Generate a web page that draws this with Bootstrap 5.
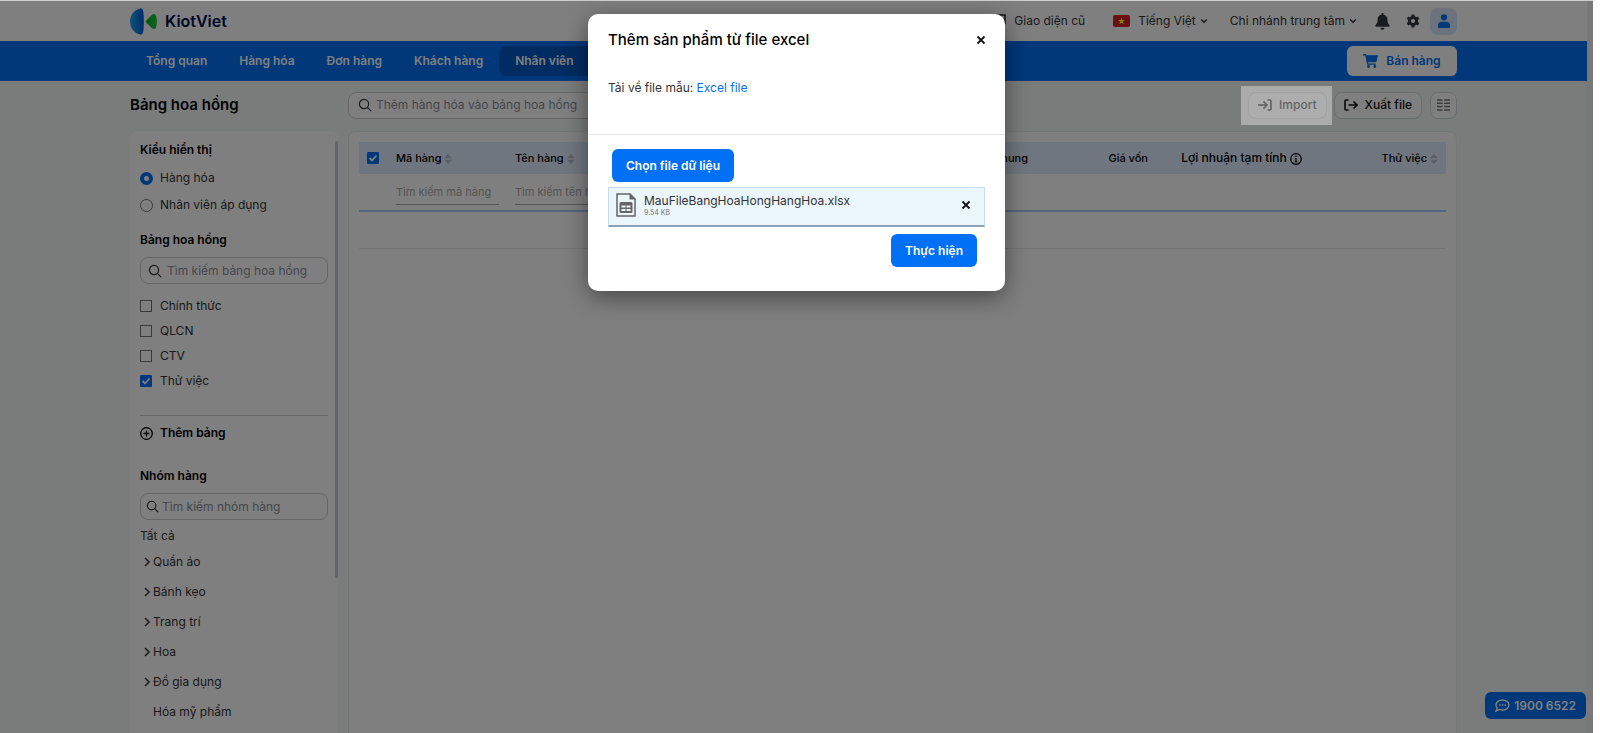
<!DOCTYPE html>
<html lang="vi">
<head>
<meta charset="utf-8">
<meta name="viewport" content="width=device-width, initial-scale=1">
<title>KiotViet - Bảng hoa hồng</title>
<link href="https://cdn.jsdelivr.net/npm/bootstrap@5.3.0/dist/css/bootstrap.min.css" rel="stylesheet">
<style>
:root{--kv:#0070f4}
html,body{height:100%}
body{font-family:Inter,"Open Sans",sans-serif;font-size:12px;line-height:18px;color:#333;background:#fff;overflow:hidden}
.shell{height:100vh;margin-right:7px;border-top:1px solid #ccc;background:#f4f8f7;padding-right:6px;position:relative;overflow:hidden}
.gutter{position:absolute;top:0;right:0;bottom:0;width:6px;background:#f0f0f0}
.wrap{max-width:1327px;width:100%;margin:0 auto}
.topbar{background:#fff;height:40px}
.brandname{font-size:16px;font-weight:600;color:#000a4d;text-decoration:none}
.topbar .lnk{color:#333;text-decoration:none;font-size:12px}
.xbtn{border:0;background:none;padding:0;line-height:0}
.avatar{width:27px;height:27px;border-radius:8px;background:#d9e7fb}
.lang{margin-right:22px}
.branch{margin-right:18px}
.gear{margin-right:10px}
.mainnav{background:var(--kv);height:40px}
.mainnav .nav-link{color:#fff;font-weight:600;font-size:12px;line-height:18px;padding:6px 16px;border-radius:8px}
.mainnav .nav-link.active{background:#0059c3;padding-right:26px}
.btn-sell{background:#fff;color:var(--kv);font-weight:600;font-size:12px;width:110px;height:30px;border-radius:6px;padding:0}
.page-title{font-size:15px;line-height:24px;font-weight:600;color:#000;margin:0}
.left-col{width:208px;flex:none}
.toolbar{height:50px;padding-bottom:2px}
.tool{height:27px;border:1px solid #d3d9de;border-radius:8px;background:#fff;font-size:12px;font-weight:500;color:#111;padding:0 9px;line-height:18px;gap:7px}
.tool-cols{width:27px;padding:0 6px}
.find{position:relative;border:1px solid #ccc;border-radius:8px;background:#fff;height:27px;display:flex;align-items:center;gap:5px;padding:0 7px}
.addfind{flex:0 1 420px;margin-left:10px;padding-left:9px;gap:4px}
.groupfind{padding-left:5px;gap:3px}
.find input,.colfind{border:0;outline:0;background:none;font-size:12px;padding:0;min-width:0;width:100%;line-height:18px}
.find input::placeholder{color:#8a8f98;opacity:1}
.gap-body{gap:10px}
.panel{background:#fff;border-radius:8px 8px 0 0}
.side{padding:10px;position:relative}
.side::after{content:"";position:absolute;right:0;top:10px;width:3px;height:437px;background:#c4c9d3;border-radius:2px}
.side h2{font-size:12px;line-height:18px;font-weight:600;color:#000;margin:0 0 8px}
.opt{display:flex;align-items:center;gap:7px;margin:0}
.views{gap:9px;padding:2px 0 17px}
.opt input,.check{appearance:none;margin:0;flex:none;width:13px;height:13px}
.opt input[type=radio]{border:1px solid #777;border-radius:50%}
.opt input[type=radio]:checked{border:4px solid var(--kv)}
.opt input[type=checkbox]{width:12px;height:12px;border:1px solid #777;margin-right:1px}
.opt input[type=checkbox]:checked,.check{border:0!important;background:var(--kv) url("data:image/svg+xml,%3Csvg xmlns='http://www.w3.org/2000/svg' viewBox='0 0 12 12'%3E%3Cpath d='M2.5 6l2.5 2.5 4.5-5' fill='none' stroke='white' stroke-width='1.8'/%3E%3C/svg%3E");border-radius:1px}
.check{width:12px;height:12px;display:block}
.boards{gap:7px;margin-top:13px;padding-bottom:25px;border-bottom:1px solid #ccc}
.addboard{border:0;background:none;padding:0;font-weight:600;color:#000;margin:8px 0 25px;gap:7px}
.all{margin:7px 0 2px}
.tree button{display:flex;align-items:center;gap:2px;border:0;background:none;padding:0 0 0 3px;height:30px;color:#333}
.content{min-width:0;border:1px solid #e6eaee;padding:10px}
.grid{width:100%;table-layout:fixed;margin:0}
.grid th{background:#e0edff;height:32px;font-size:11px;font-weight:500;color:#000;padding:0 8px;white-space:nowrap}
.grid th.profit{font-size:12px}
.grid td{padding:0 8px}
.grid .filters td{height:37px;border-bottom:2px solid #a9c8f8}
.grid .blank td{height:37px;border-bottom:1px solid #e8e8e8}
.colfind{font-size:11px;height:26px;border-bottom:1px solid #aaa;display:block}
.colfind::placeholder{color:#aaa;opacity:1}
.c1{width:29px}.c2{width:119px}.c3{width:315px}.c4{width:214px}.c5{width:120px}.c6{width:154px}
.hotline{position:absolute;right:7px;bottom:14px;background:var(--kv);color:#fff;border-radius:6px;font-weight:600;font-size:12px;height:27px;padding:0 10px;text-decoration:none;z-index:2}
.shade{position:absolute;inset:0;background:rgba(0,0,0,.5);z-index:3}
.spot{position:relative;padding:6px 5px 6px 7px;margin-right:2px}
.spot::after{content:"";position:absolute;inset:0;background:rgba(255,255,255,.36);z-index:4;pointer-events:none}
.dlg{position:absolute;top:13px;left:0;right:0;margin:0 auto;z-index:5;width:417px;max-width:100%;border-radius:10px;background:#fff;box-shadow:0 6px 24px rgba(0,0,0,.45);color:#333}
.dlg h1{font-size:15px;line-height:20px;font-weight:500;color:#000;margin:0}
.dlg .modal-header{padding:16px 19px 0 20px;border:0}
.intro{padding:29px 20px 37px;border-bottom:1px solid #e5e5e5}
.intro a{color:var(--kv);text-decoration:none}
.act{background:var(--kv);color:#fff;font-weight:600;font-size:12px;line-height:18px;height:33px;border-radius:6px;padding:0 13px}
.dlg-main{padding:14px 20px 24px}
.filebox{background:#ebf6fc;border:1px solid #c5dcf5;border-bottom:2px solid #8fa3b8;height:40px;padding:0 13px 3px 7px;margin:5px 0 7px}
.fname{font-size:12px;line-height:14px;color:#333}
.fsize{font-size:7px;line-height:9px;color:#777}
</style>
</head>
<body>
<svg class="d-none" xmlns="http://www.w3.org/2000/svg">
<symbol id="mag" viewBox="0 0 14 14"><g fill="none" stroke="currentColor" stroke-width="1.2"><circle cx="6" cy="6" r="4.6"/><path d="M9.300 9.300L13.200 13.200"/></g></symbol>
<symbol id="down" viewBox="0 0 8 8"><path d="M1.200 2.500L4 5.300l2.800-2.800" fill="none" stroke="currentColor" stroke-width="1.5"/></symbol>
<symbol id="right" viewBox="0 0 8 10"><path d="M2 1l4 4-4 4" fill="none" stroke="currentColor" stroke-width="1.5"/></symbol>
<symbol id="sort" viewBox="0 0 8 10"><path d="M4 0l4 4.300H0zM0 5.700h8L4 10z" fill="#b9bfc8"/></symbol>
<symbol id="cross" viewBox="0 0 10 10"><path d="M1.500 1.500l7 7m0-7l-7 7" stroke="#111" stroke-width="1.8"/></symbol>
</svg>
<div class="shell d-flex flex-column">
  <header class="topbar flex-shrink-0">
    <div class="wrap h-100 d-flex align-items-center justify-content-between">
      <a href="#" class="brandname d-flex align-items-center gap-2">
        <svg width="27" height="27" viewBox="0 0 27 27"><defs><linearGradient id="lb"><stop stop-color="#1ba8f0"/><stop offset="1" stop-color="#005ad8"/></linearGradient><linearGradient id="lg"><stop stop-color="#00b020"/><stop offset="1" stop-color="#20c840"/></linearGradient></defs><path d="M10.500 .4C4 1.800 0 7 0 13.500S4 25.200 10.500 26.600c2.300.4 3.300-2 3.300-13.100S12.800 0 10.500.4z" fill="url(#lb)"/><path d="M16.200 12.400l5.900-5.700c1.500-1.300 3.200-.9 3.900.8 1.200 3 1.200 9 0 12-.7 1.700-2.400 2.100-3.900.8l-5.900-5.700c-.8-.7-.8-1.500 0-2.200z" fill="url(#lg)"/></svg>
        KiotViet</a>
      <div class="d-flex align-items-center">
        <a href="#" class="lnk d-flex align-items-center gap-2 me-4 pe-1"><svg width="16" height="14" viewBox="0 0 16 14"><path d="M1 1h14v8.500H1z" fill="none" stroke="#222" stroke-width="1.500"/><path d="M1 8.500h14V10H1zM4.500 12h7v1.500h-7zM7 10h2v2.500H7z" fill="#222"/></svg>Giao diện cũ</a>
        <a href="#" class="lnk lang d-flex align-items-center"><svg class="me-2" width="17" height="12" viewBox="0 0 17 12"><rect width="17" height="12" rx="2" fill="#d81f26"/><path d="M8.500 2.500l.9 2.500h2.500L9.900 6.600l.8 2.600-2.200-1.500-2.200 1.500.8-2.600-2-1.600h2.500z" fill="#ff0"/></svg>Tiếng Việt<svg class="ms-1" width="8" height="8"><use href="#down"/></svg></a>
        <a href="#" class="lnk branch d-flex align-items-center">Chi nhánh trung tâm<svg class="ms-1" width="8" height="8"><use href="#down"/></svg></a>
        <button class="xbtn me-3" aria-label="Thông báo"><svg width="15" height="17" viewBox="0 0 15 17"><path d="M6.500 0h2v1.400C11 2 12.400 4 12.400 6.500c0 3 .8 4.300 2 5.500.6.700.2 1.800-.8 1.800H1.400c-1 0-1.400-1.100-.8-1.800 1.200-1.200 2-2.500 2-5.500C2.600 4 4 2 6.500 1.400zM5.500 14.800h4a2 2 0 01-4 0z" fill="#343a40"/></svg></button>
        <button class="xbtn gear" aria-label="Thiết lập"><svg width="14" height="14" viewBox="0 0 14 14"><circle cx="7" cy="7" r="3.600" fill="none" stroke="#343a40" stroke-width="3"/><path d="M7 .5v13M1.400 3.800l11.200 6.400M1.400 10.200l11.200-6.400" stroke="#343a40" stroke-width="3"/><circle cx="7" cy="7" r="2.100" fill="#fff"/></svg></button>
        <button class="xbtn avatar" aria-label="Tài khoản"><svg width="12" height="14" viewBox="0 0 12 14"><circle cx="6" cy="3.300" r="3.100" fill="#0070f4"/><path d="M0 13v-1.500c0-2.300 1.500-3.800 3.600-3.800h4.800c2.100 0 3.600 1.500 3.600 3.800V13c0 .6-.4 1-1 1H1c-.6 0-1-.4-1-1z" fill="#0070f4"/></svg></button>
      </div>
    </div>
  </header>
  <nav class="mainnav flex-shrink-0">
    <div class="wrap h-100 d-flex align-items-center justify-content-between">
      <div class="nav flex-nowrap">
        <a class="nav-link" href="#">Tổng quan</a><a class="nav-link" href="#">Hàng hóa</a><a class="nav-link" href="#">Đơn hàng</a><a class="nav-link" href="#">Khách hàng</a><a class="nav-link active" href="#">Nhân viên</a>
      </div>
      <button class="btn btn-sell d-flex align-items-center justify-content-center gap-2"><svg width="15" height="14" viewBox="0 0 15 14"><path d="M0 0h2.600c.4 0 .6.300.7.600l.1.700H15l-1.500 6.300c-.1.400-.4.600-.8.600H4.900l.3 1.300h7.600v1.300H4.200L2.200 1.500H0z" fill="#0070f4"/><circle cx="5.500" cy="12.500" r="1.400" fill="#0070f4"/><circle cx="11.800" cy="12.500" r="1.400" fill="#0070f4"/></svg>Bán hàng</button>
    </div>
  </nav>
  <main class="wrap flex-grow-1 d-flex flex-column">
    <div class="toolbar d-flex align-items-center flex-shrink-0">
      <div class="left-col"><p class="page-title">Bảng hoa hồng</p></div>
      <div class="find addfind"><svg width="14" height="14" class="flex-shrink-0"><use href="#mag"/></svg><input aria-label="Thêm hàng hóa" placeholder="Thêm hàng hóa vào bảng hoa hồng"></div>
      <div class="d-flex align-items-center ms-auto">
        <div class="spot"><button class="tool d-flex align-items-center"><svg width="14" height="12" viewBox="0 0 14 12"><path d="M0 6h8.500M5.500 2.500L9 6 5.500 9.500M9.500 1H12c.7 0 1 .3 1 1v8c0 .7-.3 1-1 1H9.500" fill="none" stroke="#111" stroke-width="1.600"/></svg>Import</button></div>
        <button class="tool d-flex align-items-center me-2"><svg width="14" height="12" viewBox="0 0 14 12"><path d="M4.500 1H2c-.7 0-1 .3-1 1v8c0 .7.300 1 1 1h2.500M4.500 6H13M9.500 2.500L13 6 9.500 9.500" fill="none" stroke="#111" stroke-width="1.600"/></svg>Xuất file</button>
        <button class="tool tool-cols" aria-label="Chọn cột"><svg width="13" height="12" viewBox="0 0 13 12" class="d-block"><path d="M0 1h5.600M7.200 1H13M0 4.300h5.600M7.200 4.300H13M0 7.600h5.600M7.200 7.600H13M0 10.900h5.600M7.200 10.900H13" stroke="#777" stroke-width="1.500"/></svg></button>
      </div>
    </div>
    <div class="d-flex flex-grow-1 gap-body">
      <aside class="left-col panel side">
        <h2>Kiểu hiển thị</h2>
        <div class="views d-flex flex-column">
          <label class="opt"><input type="radio" name="v" checked>Hàng hóa</label>
          <label class="opt"><input type="radio" name="v">Nhân viên áp dụng</label>
        </div>
        <h2>Bảng hoa hồng</h2>
        <div class="find"><svg width="14" height="14" class="flex-shrink-0"><use href="#mag"/></svg><input aria-label="Tìm kiếm bảng hoa hồng" placeholder="Tìm kiếm bảng hoa hồng"></div>
        <div class="boards d-flex flex-column">
          <label class="opt"><input type="checkbox">Chính thức</label><label class="opt"><input type="checkbox">QLCN</label><label class="opt"><input type="checkbox">CTV</label><label class="opt"><input type="checkbox" checked>Thử việc</label>
        </div>
        <button class="addboard d-flex align-items-center"><svg width="13" height="13" viewBox="0 0 13 13"><g fill="none" stroke="#000" stroke-width="1.300"><circle cx="6.500" cy="6.500" r="5.800"/><path d="M6.500 3.500v6M3.500 6.500h6"/></g></svg>Thêm bảng</button>
        <h2>Nhóm hàng</h2>
        <div class="find groupfind"><svg width="13" height="13" class="flex-shrink-0"><use href="#mag"/></svg><input aria-label="Tìm kiếm nhóm hàng" placeholder="Tìm kiếm nhóm hàng"></div>
        <div class="all">Tất cả</div>
        <div class="tree">
          <button><svg width="8" height="10"><use href="#right"/></svg>Quần áo</button>
          <button><svg width="8" height="10"><use href="#right"/></svg>Bánh kẹo</button>
          <button><svg width="8" height="10"><use href="#right"/></svg>Trang trí</button>
          <button><svg width="8" height="10"><use href="#right"/></svg>Hoa</button>
          <button><svg width="8" height="10"><use href="#right"/></svg>Đồ gia dụng</button>
          <button><svg width="8" height="10"></svg>Hóa mỹ phẩm</button>
        </div>
      </aside>
      <section class="panel content flex-grow-1">
        <table class="grid">
          <colgroup><col class="c1"><col class="c2"><col class="c3"><col class="c4"><col class="c5"><col class="c6"><col class="c7"></colgroup>
          <thead><tr><th><input class="check" type="checkbox" checked aria-label="Chọn tất cả"></th><th>Mã hàng <svg width="8" height="10"><use href="#sort"/></svg></th><th>Tên hàng <svg width="8" height="10"><use href="#sort"/></svg></th><th class="text-end">Giá chung</th><th class="text-end">Giá vốn</th><th class="text-end profit">Lợi nhuận tạm tính <svg width="12" height="12" viewBox="0 0 12 12"><g fill="none" stroke="#000" stroke-width="1.200"><circle cx="6" cy="6" r="5.300"/><path d="M6 5.200v3.500M4.800 8.700h2.400M5 5.500h1M5.400 3.300h1.200"/></g></svg></th><th class="text-end">Thử việc <svg width="8" height="10"><use href="#sort"/></svg></th></tr></thead>
          <tbody><tr class="filters"><td></td><td><input class="colfind" aria-label="Tìm kiếm mã hàng" placeholder="Tìm kiếm mã hàng"></td><td><input class="colfind" aria-label="Tìm kiếm tên hàng" placeholder="Tìm kiếm tên hàng"></td><td colspan="4"></td></tr><tr class="blank"><td colspan="7"></td></tr></tbody>
        </table>
      </section>
    </div>
  </main>
  <a href="#" class="hotline d-flex align-items-center gap-1"><svg width="15" height="13" viewBox="0 0 15 13"><path d="M7.500 1C11 1 14 3 14 6s-3 5-6.500 5c-1 0-2-.2-3-.6L1 12l1.200-2.800C1.400 8.300 1 7.200 1 6c0-3 3-5 6.500-5z" fill="none" stroke="#fff" stroke-width="1.400"/><path d="M4 6h1.500M6.800 6h1.500M9.600 6h1.500" stroke="#fff" stroke-width="1.500"/></svg>1900 6522</a>
  <div class="gutter"></div>
  <div class="shade"></div>
  <div class="dlg" role="dialog" aria-labelledby="dt">
    <div class="modal-header"><h1 id="dt">Thêm sản phẩm từ file excel</h1><button class="xbtn" aria-label="Đóng"><svg width="10" height="10"><use href="#cross"/></svg></button></div>
    <div class="intro">Tải về file mẫu: <a href="#">Excel file</a></div>
    <div class="dlg-main">
      <button class="btn act ms-1">Chọn file dữ liệu</button>
      <div class="filebox d-flex align-items-center"><svg width="20" height="24" viewBox="0 0 20 24"><path d="M1 1h13l5 5v17H1z" fill="none" stroke="#666" stroke-width="1.500"/><path d="M13.500 0L20 6.500h-6.500z" fill="#666"/><path d="M5 9h10a1.500 1.500 0 011.500 1.500v8A1.500 1.500 0 0115 20H5a1.500 1.500 0 01-1.500-1.500v-8A1.500 1.500 0 015 9z" fill="#666"/><path d="M5.500 12.500h4v2h-4zM10.500 12.500h4v2h-4zM5.500 16h4v2h-4zM10.500 16h4v2h-4z" fill="#ebf6fc"/></svg><div class="ms-2"><div class="fname">MauFileBangHoaHongHangHoa.xlsx</div><div class="fsize">9.54 KB</div></div><button class="xbtn ms-auto" aria-label="Xóa file"><svg width="10" height="10"><use href="#cross"/></svg></button></div>
      <div class="text-end pe-2"><button class="btn act">Thực hiện</button></div>
    </div>
  </div>
</div>
<script src="https://cdn.jsdelivr.net/npm/bootstrap@5.3.0/dist/js/bootstrap.bundle.min.js"></script>
</body>
</html>
